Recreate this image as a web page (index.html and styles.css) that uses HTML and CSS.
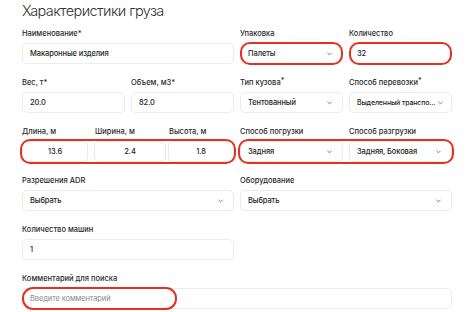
FILE: index.html
```html
<!DOCTYPE html>
<html lang="ru">
<head>
<meta charset="utf-8">
<link rel="stylesheet" href="styles.css">
</head>
<body>
<div class="page">
  <h1 class="title">Характеристики груза</h1>
  <div class="form">
    <div class="field span2">
      <div class="label">Наименование*</div>
      <div class="input">Макаронные изделия</div>
    </div>
    <div class="field">
      <div class="label">Упаковка</div>
      <div class="input select mark">Палеты<svg class="chev" viewBox="0 0 6 4"><polyline points="0.5,0.5 3,3 5.5,0.5"/></svg></div>
    </div>
    <div class="field">
      <div class="label">Количество</div>
      <div class="input mark">32</div>
    </div>

    <div class="field">
      <div class="label">Вес, т*</div>
      <div class="input">20.0</div>
    </div>
    <div class="field">
      <div class="label">Объем, м3*</div>
      <div class="input">82.0</div>
    </div>
    <div class="field">
      <div class="label">Тип кузова<sup>*</sup></div>
      <div class="input select">Тентованный<svg class="chev" viewBox="0 0 6 4"><polyline points="0.5,0.5 3,3 5.5,0.5"/></svg></div>
    </div>
    <div class="field">
      <div class="label">Способ перевозки<sup>*</sup></div>
      <div class="input select tight"><span class="ell">Выделенный транспо...</span><svg class="chev" viewBox="0 0 6 4"><polyline points="0.5,0.5 3,3 5.5,0.5"/></svg></div>
    </div>

    <div class="dims span2">
      <div class="dims-labels">
        <div class="label">Длина, м</div>
        <div class="label">Ширина, м</div>
        <div class="label">Высота, м</div>
      </div>
      <div class="dims-inputs mark">
        <div class="input center">13.6</div>
        <div class="input center">2.4</div>
        <div class="input center">1.8</div>
      </div>
    </div>
    <div class="pair span2">
      <div class="pair-labels">
        <div class="label">Способ погрузки</div>
        <div class="label">Способ разгрузки</div>
      </div>
      <div class="pair-inputs mark">
        <div class="input select">Задняя<svg class="chev" viewBox="0 0 6 4"><polyline points="0.5,0.5 3,3 5.5,0.5"/></svg></div>
        <div class="input select">Задняя, Боковая<svg class="chev" viewBox="0 0 6 4"><polyline points="0.5,0.5 3,3 5.5,0.5"/></svg></div>
      </div>
    </div>

    <div class="field span2">
      <div class="label">Разрешения ADR</div>
      <div class="input select">Выбрать<svg class="chev" viewBox="0 0 6 4"><polyline points="0.5,0.5 3,3 5.5,0.5"/></svg></div>
    </div>
    <div class="field span2">
      <div class="label">Оборудование</div>
      <div class="input select">Выбрать<svg class="chev" viewBox="0 0 6 4"><polyline points="0.5,0.5 3,3 5.5,0.5"/></svg></div>
    </div>

    <div class="field span2">
      <div class="label">Количество машин</div>
      <div class="input">1</div>
    </div>
    <div class="field span2"></div>

    <div class="field span4">
      <div class="label">Комментарий для поиска</div>
      <div class="input placeholder comment">Введите комментарий</div>
    </div>
  </div>
</div>
</body>
</html>
```
FILE: styles.css
```css
* { box-sizing: border-box; }
html, body { margin: 0; padding: 0; background: #fff; }
body {
  font-family: Inter, "Noto Sans", sans-serif;
  color: #222;
  width: 474px;
  height: 312px;
  overflow: hidden;
}
.page { padding: 0 22px 0 22px; }
.title {
  margin: 0;
  height: 28px;
  padding-top: 1px;
  font-size: 14.5px;
  line-height: 20px;
  font-weight: 300;
  color: #333;
  letter-spacing: -0.6px;
}
.form {
  display: grid;
  grid-template-columns: repeat(4, minmax(0, 1fr));
  column-gap: 6px;
  row-gap: 13px;
}
.field, .dims, .pair { min-width: 0; }
.span2 { grid-column: span 2; }
.span4 { grid-column: span 4; }
.label {
  height: 12px;
  margin-bottom: 3px;
  font-size: 7.5px;
  line-height: 12px;
  font-weight: 500;
  color: #2a2a2a;
  white-space: nowrap;
}
.label sup { font-size: 7px; line-height: 0; vertical-align: 2px; }
.input {
  position: relative;
  height: 21px;
  border: 1px solid #ececec;
  border-radius: 5px;
  background: #fff;
  padding: 0 7px;
  display: flex;
  align-items: center;
  font-size: 7.5px;
  font-weight: 500;
  color: #1e1e1e;
  white-space: nowrap;
  min-width: 0;
  letter-spacing: -0.1px;
}
.select { justify-content: space-between; padding-right: 10px; }
.select.tight { padding-right: 8px; padding-left: 7px; }
.ell { flex: none; font-size: 7px; letter-spacing: -0.15px; }
.chev { width: 5px; height: 4px; flex: none; fill: none; stroke: #666; stroke-width: 1; }
.center { justify-content: center; }
.placeholder { color: #8a8a8a; font-weight: 400; }
.dims-inputs {
  display: grid;
  grid-template-columns: 66px minmax(0, 1fr) 66px;
  column-gap: 0;
}
.dims-inputs .input:nth-child(2) { margin: 0 2px 0 6px; }
.dims-labels {
  display: grid;
  grid-template-columns: 73px 74px minmax(0, 1fr);
}
.dims-inputs .input { padding: 0; }
.pair-labels, .pair-inputs {
  display: grid;
  grid-template-columns: repeat(2, minmax(0, 1fr));
  column-gap: 6px;
}
.dims-inputs, .pair-inputs { position: relative; }
.mark::after {
  content: "";
  position: absolute;
  border: 2px solid #e2321f;
  border-radius: 10px;
  pointer-events: none;
}
.input.mark::after { inset: -2px -1px; }
.dims-inputs.mark::after, .pair-inputs.mark::after { inset: -2px -2px; }
.comment::after {
  content: "";
  position: absolute;
  left: -1px;
  top: -2px;
  width: 151px;
  bottom: -2px;
  border: 2px solid #e2321f;
  border-radius: 11px;
}
```
